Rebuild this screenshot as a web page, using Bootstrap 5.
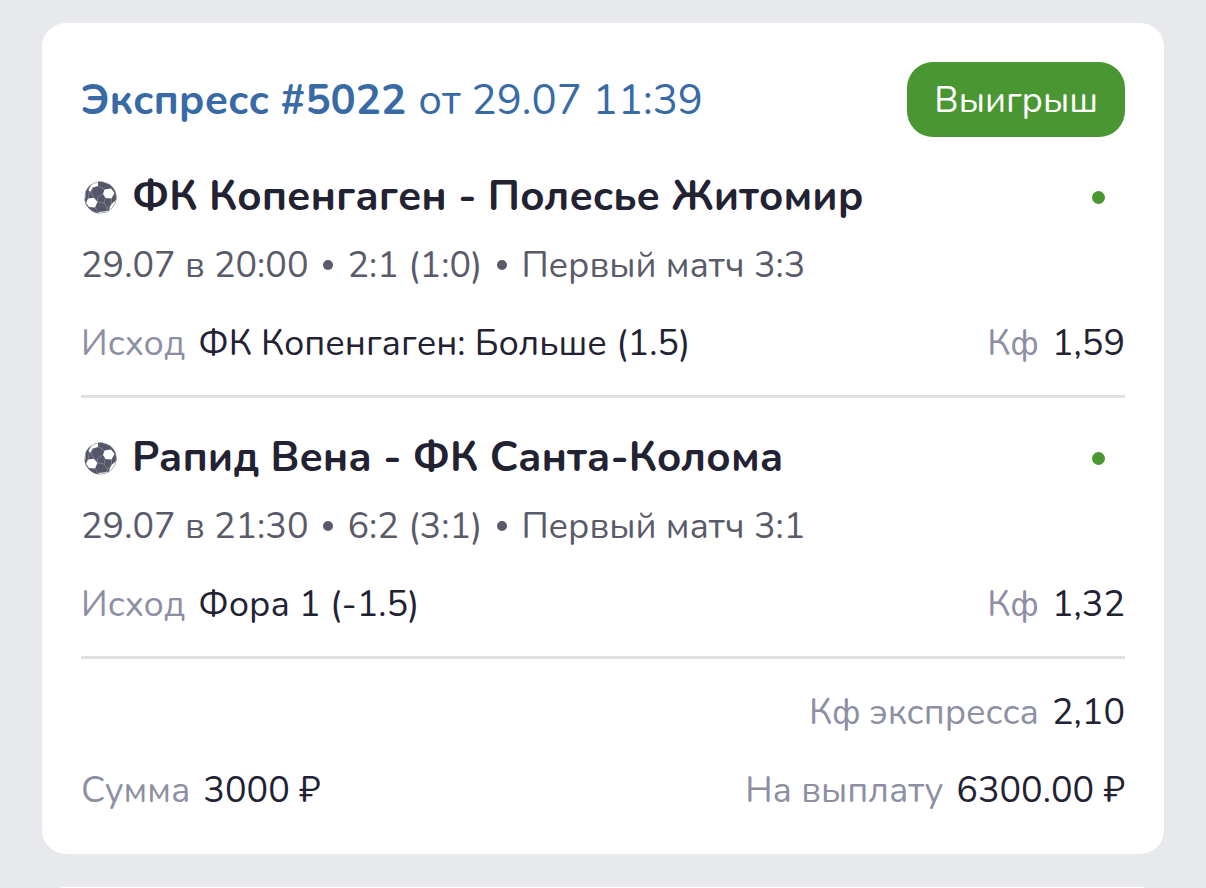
<!DOCTYPE html>
<html lang="ru">
<head>
<meta charset="utf-8">
<meta name="viewport" content="width=device-width, initial-scale=1">
<title>Экспресс #5022</title>
<link href="https://cdn.jsdelivr.net/npm/bootstrap@5.3.0/dist/css/bootstrap.min.css" rel="stylesheet">
<style>
  body { background: #e8e9ed; color: #222233; font-family: Nunito, "Noto Sans", sans-serif; font-size: 36px; line-height: 48px; }
  .bets { padding: 23px 42px 0; gap: 33px; }
  .bet { --bs-card-border-width: 0; --bs-card-border-radius: 24px; --bs-card-bg: #fff; color: inherit; padding: 39px; }
  .bet-next { height: 80px; padding: 0; }
  .bet-link { color: #386ba5; font-size: 42px; gap: 12px; padding-top: 2px; }
  .bet-status { --bs-btn-bg: #4a9632; --bs-btn-color: #fff; --bs-btn-border-width: 0; --bs-btn-border-radius: 26px; --bs-btn-font-size: 36px; --bs-btn-line-height: 48px; --bs-btn-hover-bg: #3f842a; --bs-btn-hover-color: #fff; height: 75px; padding: 2px 27px 0; }
  .event { border-bottom: 3px solid #e1e1e3; padding: 33px 0 27px; }
  .event-title { font-size: 42px; line-height: 54px; gap: 15px; }
  .event-meta { color: #5a5b6a; margin-top: 18px; }
  .meta-dot { width: 10px; height: 10px; background: currentColor; margin: 0 14px 2px 15px; }
  .event-pick { margin-top: 30px; }
  .ball { width: 33px; height: 33px; margin-left: 3px; }
  .won-dot { width: 13px; height: 13px; background: #4a9632; margin-right: 20px; }
  .pair { gap: 13px; }
  .caption-text { color: #8d8fa3; }
  .totals { padding-top: 30px; gap: 30px; }
</style>
</head>
<body class="vh-100 overflow-hidden">
<svg class="d-none" aria-hidden="true">
  <symbol id="ball" viewBox="0 0 33 33">
    <clipPath id="ball-edge"><circle cx="16.5" cy="16.5" r="16"/></clipPath>
    <circle cx="16.5" cy="16.5" r="16" fill="#555768"/>
    <g clip-path="url(#ball-edge)">
      <g fill="#fff">
        <path d="M20.5 8.5l6.5-1 3.500 4.500-3 5.500-6-.5-2.500-4z"/>
        <path d="M4 17.500l6-.8 3.500 4.300-2.500 5.500-6-.5-3-4z"/>
        <path d="M4.500 9L8 2l6-2v5l-5 1.500-3 4.500z"/>
        <path d="M27.500 23l4.500-4 2 1-4 8-5 3 .5-4z"/>
        <path d="M14 31l6-.5 5-1-3 4h-7z"/>
        <path d="M18 0l5 1 3 2-5-1z"/>
        <path d="M0 12l1.500-1v6L0 18z"/>
      </g>
      <path d="M14 4.500l6.500 4M5.500 10l-1.500 7.500M9 6l-2 5.500M19 13l-5.500 3.500v4.500M10 16.700L7 11.500M13.500 21l6.500 1 1.500-5M20 22l3.500 5 4-4M27.500 17.500V23M11 26.500l3 4.500M23.500 27l-1 3" fill="none" stroke="#9698a5" stroke-width=".6"/>
    </g>
    <circle cx="16.500" cy="16.500" r="15.700" fill="none" stroke="#777987" stroke-width=".6"/>
  </symbol>
</svg>
<main class="bets d-flex flex-column">
  <article class="card bet">
    <header class="d-flex justify-content-between align-items-center">
      <a class="bet-link d-flex text-decoration-none" href="#"><strong class="fw-bold">Экспресс #5022</strong> <span>от 29.07 11:39</span></a>
      <button class="btn bet-status" type="button">Выигрыш</button>
    </header>

    <section class="event">
      <div class="d-flex justify-content-between align-items-center">
        <h2 class="event-title d-flex align-items-center fw-bold m-0"><svg class="ball" aria-hidden="true"><use href="#ball"/></svg>ФК Копенгаген - Полесье Житомир</h2>
        <span class="won-dot rounded-circle"></span>
      </div>
      <div class="event-meta d-flex align-items-center"><span>29.07 в 20:00</span><span class="meta-dot rounded-circle"></span><span>2:1 (1:0)</span><span class="meta-dot rounded-circle"></span><span>Первый матч 3:3</span></div>
      <div class="event-pick d-flex justify-content-between">
        <div class="pair d-flex"><span class="caption-text">Исход</span><span>ФК Копенгаген: Больше (1.5)</span></div>
        <div class="pair d-flex"><span class="caption-text">Кф</span><span>1,59</span></div>
      </div>
    </section>

    <section class="event">
      <div class="d-flex justify-content-between align-items-center">
        <h2 class="event-title d-flex align-items-center fw-bold m-0"><svg class="ball" aria-hidden="true"><use href="#ball"/></svg>Рапид Вена - ФК Санта-Колома</h2>
        <span class="won-dot rounded-circle"></span>
      </div>
      <div class="event-meta d-flex align-items-center"><span>29.07 в 21:30</span><span class="meta-dot rounded-circle"></span><span>6:2 (3:1)</span><span class="meta-dot rounded-circle"></span><span>Первый матч 3:1</span></div>
      <div class="event-pick d-flex justify-content-between">
        <div class="pair d-flex"><span class="caption-text">Исход</span><span>Фора 1 (-1.5)</span></div>
        <div class="pair d-flex"><span class="caption-text">Кф</span><span>1,32</span></div>
      </div>
    </section>

    <footer class="totals d-flex flex-column">
      <div class="pair d-flex justify-content-end"><span class="caption-text">Кф экспресса</span><span>2,10</span></div>
      <div class="d-flex justify-content-between">
        <div class="pair d-flex"><span class="caption-text">Сумма</span><span>3000 ₽</span></div>
        <div class="pair d-flex"><span class="caption-text">На выплату</span><span>6300.00 ₽</span></div>
      </div>
    </footer>
  </article>
  <article class="card bet bet-next"></article>
</main>
<script src="https://cdn.jsdelivr.net/npm/bootstrap@5.3.0/dist/js/bootstrap.bundle.min.js"></script>
</body>
</html>
